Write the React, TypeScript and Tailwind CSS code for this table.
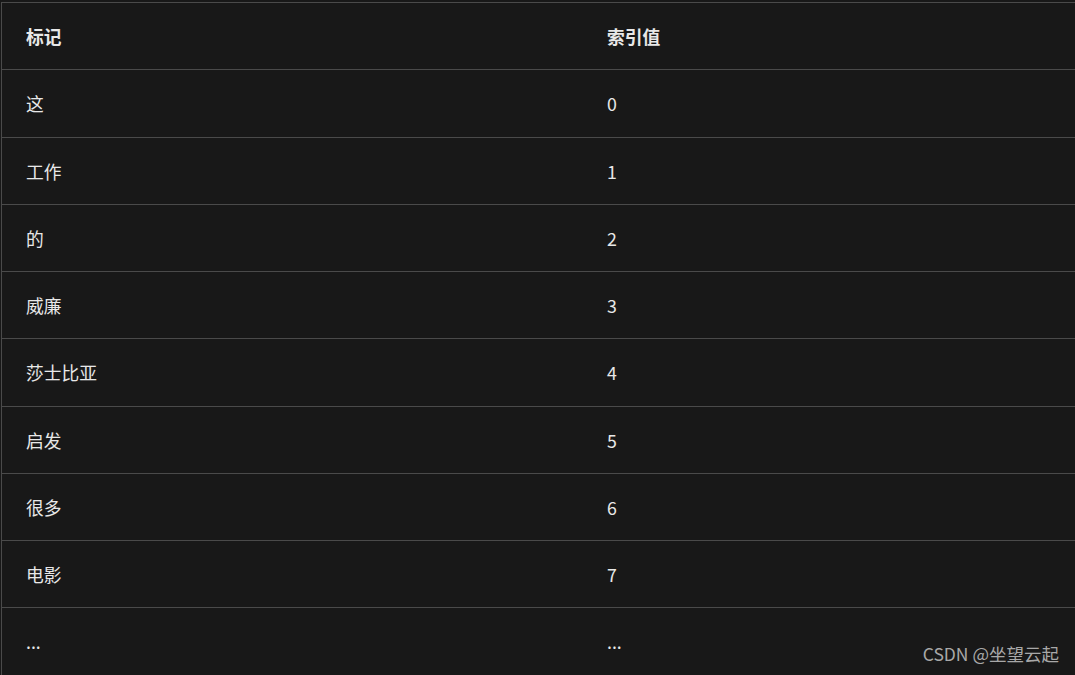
const rows = [
  { token: '这', idx: '0', h: 'h-[68px]' },
  { token: '工作', idx: '1', h: 'h-[67px]' },
  { token: '的', idx: '2', h: 'h-[67px]' },
  { token: '威廉', idx: '3', h: 'h-[67px]' },
  { token: '莎士比亚', idx: '4', h: 'h-[68px]' },
  { token: '启发', idx: '5', h: 'h-[67px]' },
  { token: '很多', idx: '6', h: 'h-[67px]' },
  { token: '电影', idx: '7', h: 'h-[67px]' },
  { token: '...', idx: '...', h: 'h-[68px]' },
]

export default function App() {
  return (
    <div
      className="relative w-[1075px] h-[675px] overflow-hidden bg-[#181818] pt-[2px] pl-[1px] text-[17.75px] text-[#e8e8e8]"
      style={{ fontFamily: '"Microsoft YaHei", "Noto Sans CJK SC", sans-serif' }}
    >
      <div className="w-[1170px] border-t border-l border-[#4a4a4a]">
        <div className="grid grid-cols-[582px_588px] h-[67px] items-center border-b border-[#4a4a4a] font-bold">
          <div className="pl-[24px]">标记</div>
          <div className="pl-[23px]">索引值</div>
        </div>
        {rows.map((r, i) => (
          <div
            key={i}
            className={`grid grid-cols-[582px_588px] items-center border-b border-[#4a4a4a] ${r.h}`}
          >
            <div className="pl-[24px]">{r.token}</div>
            <div className="pl-[23px]">{r.idx}</div>
          </div>
        ))}
      </div>
      <div className="absolute right-[16px] bottom-[8px] text-[17.5px] text-[#a8a8a8]">CSDN @坐望云起</div>
    </div>
  )
}
